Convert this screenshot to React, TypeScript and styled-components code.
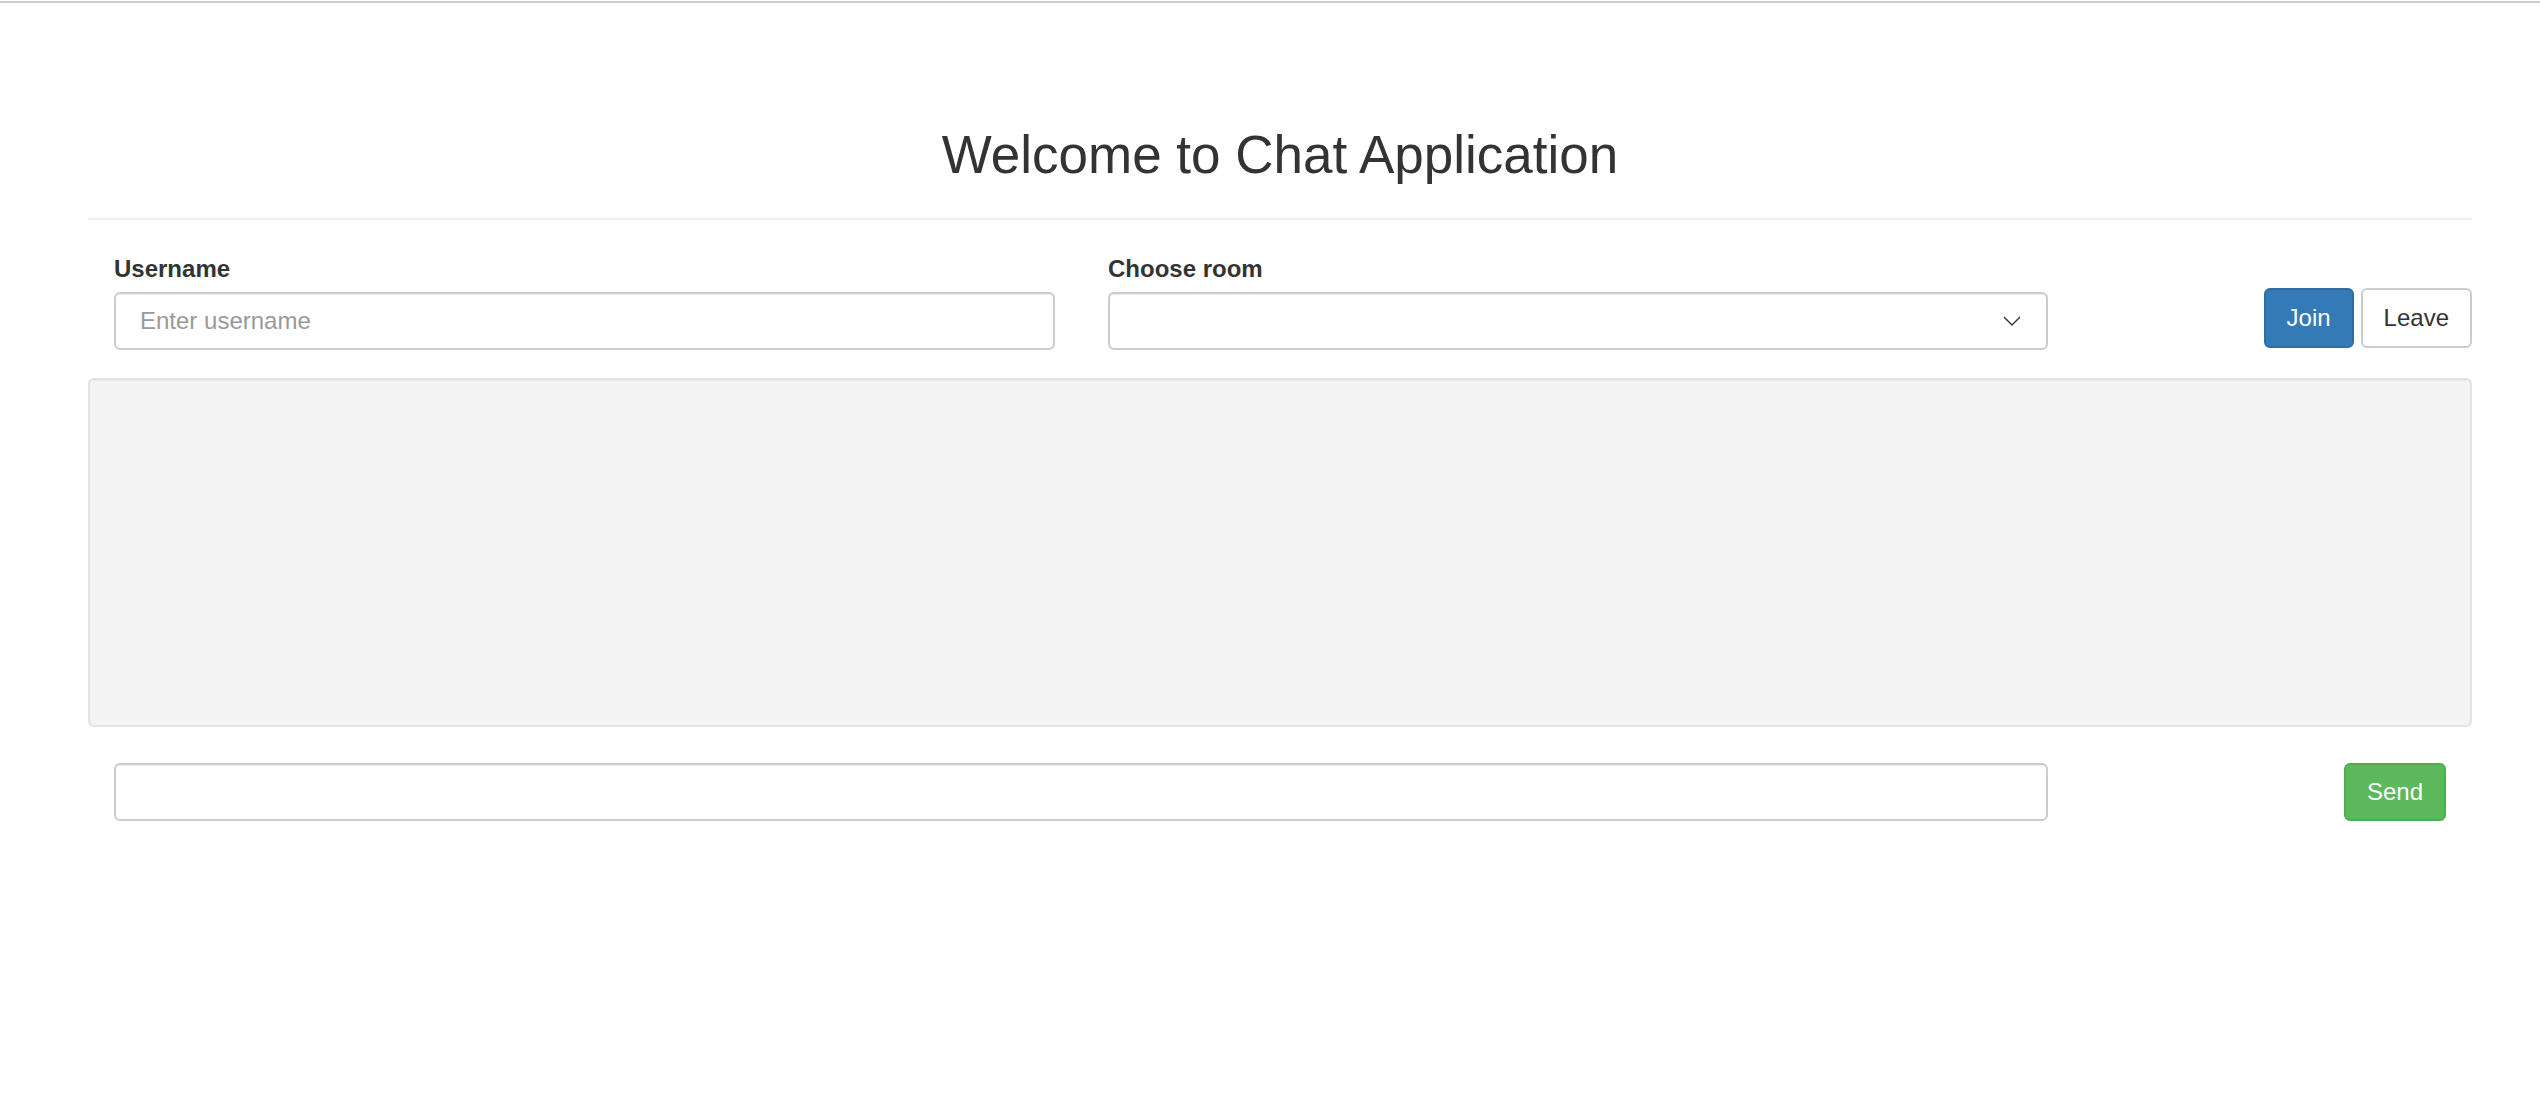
import React from "react";
import styled, { createGlobalStyle } from "styled-components";

const GlobalStyle = createGlobalStyle`
  html, body {
    margin: 0;
    padding: 0;
    background: #ffffff;
  }
  body {
    font-family: "Liberation Sans", Arial, Helvetica, sans-serif;
    color: #333333;
  }
  * { box-sizing: border-box; }
`;

const TopRule = styled.div`
  margin-top: 1px;
  height: 2px;
  background: #cdcdcd;
`;

const Container = styled.div`
  margin: 0 68px 0 88px;
  display: flex;
  flex-direction: column;
`;

const Title = styled.h1`
  margin: 122px 0 0;
  font-size: 53px;
  line-height: 59px;
  font-weight: 400;
  text-align: center;
  color: #333333;
`;

const Divider = styled.hr`
  margin: 34px 0 0;
  border: 0;
  height: 2px;
  background: #eeeeee;
`;

const FormRow = styled.div`
  display: grid;
  grid-template-columns: 941px 940px 1fr;
  column-gap: 53px;
  padding-left: 26px;
  margin-top: 35px;
  align-items: end;
`;

const Field = styled.div`
  display: flex;
  flex-direction: column;
`;

const Label = styled.label`
  font-size: 24px;
  line-height: 28px;
  font-weight: 700;
  color: #333333;
  margin-bottom: 9px;
`;

const TextInput = styled.input`
  height: 58px;
  width: 100%;
  border: 2px solid #cccccc;
  border-radius: 6px;
  padding: 0 24px;
  font-family: inherit;
  font-size: 24px;
  color: #555555;
  background: #ffffff;
  box-shadow: inset 0 1px 1px rgba(0, 0, 0, 0.075);
  outline: none;
  &::placeholder {
    color: #999999;
  }
`;

const SelectWrap = styled.div`
  position: relative;
  height: 58px;
`;

const Select = styled.select`
  appearance: none;
  -webkit-appearance: none;
  height: 58px;
  width: 100%;
  border: 2px solid #cccccc;
  border-radius: 6px;
  padding: 0 24px;
  font-family: inherit;
  font-size: 24px;
  color: #555555;
  background: #ffffff;
  box-shadow: inset 0 1px 1px rgba(0, 0, 0, 0.075);
  outline: none;
`;

const Chevron = styled.svg`
  position: absolute;
  right: 27px;
  top: 24px;
  width: 18px;
  height: 10px;
  pointer-events: none;
`;

const ButtonGroup = styled.div`
  display: flex;
  justify-content: flex-end;
  gap: 7px;
  margin-bottom: 2px;
`;

const Button = styled.button<{ $variant: "primary" | "default" | "success"; $h?: number }>`
  height: ${(p) => p.$h ?? 60}px;
  padding: 0 21px;
  font-family: inherit;
  font-size: 24px;
  line-height: 1;
  border-radius: 6px;
  border: 2px solid
    ${(p) =>
      p.$variant === "primary" ? "#2e6da4" : p.$variant === "success" ? "#4cae4c" : "#cccccc"};
  background: ${(p) =>
    p.$variant === "primary" ? "#337ab7" : p.$variant === "success" ? "#5cb85c" : "#ffffff"};
  color: ${(p) => (p.$variant === "default" ? "#333333" : "#ffffff")};
  cursor: pointer;
`;

const ChatWell = styled.div`
  margin-top: 28px;
  height: 349px;
  background: #f4f4f4;
  border: 2px solid #e3e3e3;
  border-radius: 6px;
  box-shadow: inset 0 1px 1px rgba(0, 0, 0, 0.05);
`;

const MessageRow = styled.div`
  display: grid;
  grid-template-columns: 1934px 1fr;
  padding: 0 26px;
  margin-top: 36px;
  align-items: center;
`;

const SendCell = styled.div`
  display: flex;
  justify-content: flex-end;
`;

export default function App() {
  return (
    <>
      <GlobalStyle />
      <TopRule />
      <Container>
        <Title>Welcome to Chat Application</Title>
        <Divider />
        <FormRow>
          <Field>
            <Label htmlFor="username">Username</Label>
            <TextInput id="username" placeholder="Enter username" />
          </Field>
          <Field>
            <Label htmlFor="room">Choose room</Label>
            <SelectWrap>
              <Select id="room" defaultValue="">
                <option value=""></option>
              </Select>
              <Chevron viewBox="0 0 18 10" fill="none">
                <polyline points="1,1 9,9 17,1" stroke="#333333" strokeWidth="1.4" />
              </Chevron>
            </SelectWrap>
          </Field>
          <ButtonGroup>
            <Button $variant="primary">Join</Button>
            <Button $variant="default">Leave</Button>
          </ButtonGroup>
        </FormRow>
        <ChatWell />
        <MessageRow>
          <TextInput />
          <SendCell>
            <Button $variant="success" $h={58}>Send</Button>
          </SendCell>
        </MessageRow>
      </Container>
    </>
  );
}
